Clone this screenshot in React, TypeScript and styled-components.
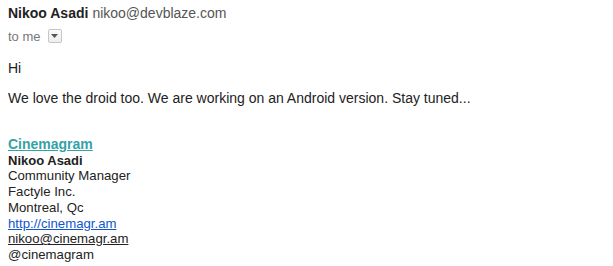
import React from "react";
import styled, { createGlobalStyle } from "styled-components";

const Global = createGlobalStyle`
  html, body { margin: 0; padding: 0; background: #fff; }
  body { font-family: "Liberation Sans", Arial, sans-serif; }
`;

const Page = styled.div`
  padding: 4px 8px 0 8px;
  font-family: "Liberation Sans", Arial, sans-serif;
  color: #222;
`;

const Header = styled.div`
  font-size: 14px;
  line-height: 18px;
  display: flex;
  gap: 4px;
  align-items: baseline;
`;

const Name = styled.span`
  font-weight: bold;
  color: #222;
`;

const Email = styled.span`
  color: #555;
`;

const ToRow = styled.div`
  display: flex;
  align-items: center;
  gap: 7px;
  margin-top: 6px;
  font-size: 13px;
  color: #777;
  height: 16px;
`;

const DropBox = styled.span`
  width: 12px;
  height: 12px;
  border: 1px solid #c6c6c6;
  border-radius: 2px;
  background: linear-gradient(#fafafa, #eee);
  display: flex;
  align-items: center;
  justify-content: center;
`;

const Body = styled.div`
  margin-top: 16px;
  font-size: 14px;
  line-height: 16px;
  color: #222;
`;

const Para = styled.p`
  margin: 0 0 14px 0;
`;

const Signature = styled.div`
  margin-top: 31px;
  font-size: 13.2px;
  line-height: 15.7px;
  color: #222;
`;

const Brand = styled.a`
  display: block;
  color: #34a2a6;
  font-weight: bold;
  font-size: 14px;
  text-decoration: underline;
`;

const SigName = styled.div`
  font-weight: bold;
  font-size: 13px;
`;

const Line = styled.div``;

const Link = styled.a<{ $tone: "blue" | "dark" }>`
  display: block;
  color: ${(p) => (p.$tone === "blue" ? "#1155cc" : "#222")};
  text-decoration: underline;
`;

export default function App() {
  return (
    <>
      <Global />
      <Page>
        <Header>
          <Name>Nikoo Asadi</Name>
          <Email>nikoo@devblaze.com</Email>
        </Header>
        <ToRow>
          <span>to me</span>
          <DropBox>
            <svg width="7" height="4" viewBox="0 0 7 4">
              <path d="M0 0h7L3.5 4z" fill="#555" />
            </svg>
          </DropBox>
        </ToRow>
        <Body>
          <Para>Hi</Para>
          <Para>We love the droid too. We are working on an Android version. Stay tuned...</Para>
        </Body>
        <Signature>
          <Brand>Cinemagram</Brand>
          <SigName>Nikoo Asadi</SigName>
          <Line>Community Manager</Line>
          <Line>Factyle Inc.</Line>
          <Line>Montreal, Qc</Line>
          <Link $tone="blue">http://cinemagr.am</Link>
          <Link $tone="dark">nikoo@cinemagr.am</Link>
          <Line>@cinemagram</Line>
        </Signature>
      </Page>
    </>
  );
}
